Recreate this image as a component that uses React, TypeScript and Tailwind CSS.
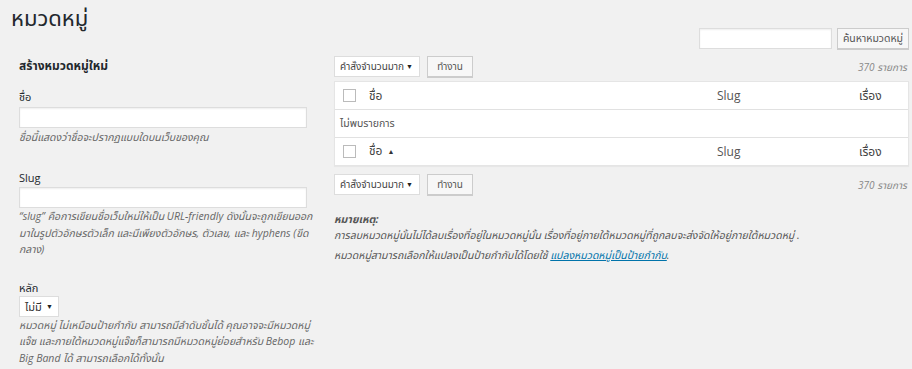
export default function App() {
  const font = { fontFamily: '"Open Sans", "Noto Sans", "Noto Sans Thai", Tahoma, sans-serif' };

  const BulkBar = () => (
    <div className="flex items-center justify-between">
      <div className="flex gap-[7px]">
        <div className="w-[86px] h-[21px] bg-white border border-[#ddd] flex items-center justify-between pl-[5px] pr-[6px] text-[10px] leading-[19px] text-[#444] whitespace-nowrap">
          <span>คำสั่งจำนวนมาก</span>
          <span className="text-[7px] text-[#222]">▼</span>
        </div>
        <button className="h-[21px] w-[46px] bg-[#f7f7f7] border border-[#ccc] text-[10px] leading-[19px] text-[#555] shadow-[0_1px_0_#ccc]">
          ทำงาน
        </button>
      </div>
      <span className="italic text-[10px] leading-[16px] text-[#888] pr-[2px]">370 รายการ</span>
    </div>
  );

  const HeadRow = ({ arrow }: { arrow?: boolean }) => (
    <div className="flex items-center h-[27px]">
      <span className="ml-[8px] w-[13px] h-[13px] border border-[#bbb] bg-white" />
      <span className="ml-[13px] flex-1 text-[12px] leading-[16px] text-[#444]">
        ชื่อ{arrow && <span className="text-[7px] align-middle ml-[5px] text-[#333]">▲</span>}
      </span>
      <span className="w-[142px] text-[12px] leading-[16px] text-[#555]">Slug</span>
      <span className="w-[49px] text-[12px] leading-[16px] text-[#444]">เรื่อง</span>
    </div>
  );

  return (
    <div className="w-[912px] h-[369px] overflow-hidden bg-[#f1f1f1] text-[#444]" style={font}>
      <div className="flex items-start justify-between pl-[11px] pr-[3px] pt-[2px]">
        <h1 className="text-[22px] leading-[30px] text-[#23282d] font-normal">หมวดหมู่</h1>
        <div className="flex gap-[5px] mt-[26px]">
          <input className="w-[133px] h-[21px] bg-white border border-[#ddd] shadow-[inset_0_1px_2px_rgba(0,0,0,0.07)]" />
          <button className="h-[21px] w-[72px] bg-[#f7f7f7] border border-[#ccc] text-[10.5px] leading-[19px] text-[#555] whitespace-nowrap shadow-[0_1px_0_#ccc]">
            ค้นหาหมวดหมู่
          </button>
        </div>
      </div>

      <div className="flex pl-[19px] pr-[3px] mt-[7px]">
        {/* left column */}
        <div className="w-[300px] shrink-0">
          <h2 className="font-bold text-[12px] text-[#23282d] leading-[20px]">สร้างหมวดหมู่ใหม่</h2>

          <label className="block mt-[13px] text-[11px] leading-[16px] text-[#23282d]">ชื่อ</label>
          <input className="block mt-[2px] w-[288px] h-[21px] bg-white border border-[#ddd] shadow-[inset_0_1px_2px_rgba(0,0,0,0.07)]" />
          <p className="italic text-[10.5px] leading-[16px] text-[#666] mt-[1px] whitespace-nowrap">
            ชื่อนี้แสดงว่าชื่อจะปรากฏแบบใดบนเว็บของคุณ
          </p>

          <label className="block mt-[25px] text-[11px] leading-[16px] text-[#23282d]">Slug</label>
          <input className="block mt-[1px] w-[288px] h-[21px] bg-white border border-[#ddd] shadow-[inset_0_1px_2px_rgba(0,0,0,0.07)]" />
          <p className="italic text-[10.5px] leading-[16.5px] text-[#666] whitespace-nowrap">
            “slug” คือการเขียนชื่อเว็บใหม่ให้เป็น URL-friendly ดังนั้นจะถูกเขียนออก
            <br />
            มาในรูปตัวอักษรตัวเล็ก และมีเพียงตัวอักษร, ตัวเลข, และ hyphens (ขีด
            <br />
            กลาง)
          </p>

          <label className="block mt-[22px] text-[11px] leading-[16px] text-[#23282d]">หลัก</label>
          <div className="w-[40px] h-[21px] bg-white border border-[#ddd] flex items-center justify-between pl-[5px] pr-[5px] text-[11px] leading-[19px] text-[#333]">
            <span>ไม่มี</span>
            <span className="text-[7px] text-[#222]">▼</span>
          </div>
          <p className="italic text-[10.5px] leading-[16.5px] text-[#666] whitespace-nowrap">
            หมวดหมู่ ไม่เหมือนป้ายกำกับ สามารถมีลำดับชั้นได้ คุณอาจจะมีหมวดหมู่
            <br />
            แจ๊ซ และภายใต้หมวดหมู่แจ๊ซก็สามารถมีหมวดหมู่ย่อยสำหรับ Bebop และ
            <br />
            Big Band ได้ สามารถเลือกได้ทั้งนั้น
          </p>
        </div>

        {/* right column */}
        <div className="flex-1 ml-[15px]">
          <BulkBar />

          <div className="mt-[4px] bg-white border border-[#e5e5e5] shadow-[0_1px_1px_rgba(0,0,0,0.04)]">
            <div className="border-b border-[#e1e1e1]">
              <HeadRow />
            </div>
            <div className="flex items-center h-[28px] border-b border-[#e1e1e1] pl-[5px] text-[10.5px] text-[#555]">
              ไม่พบรายการ
            </div>
            <HeadRow arrow />
          </div>

          <div className="mt-[8px]">
            <BulkBar />
          </div>

          <div className="mt-[16px] italic text-[10.5px] text-[#555] whitespace-nowrap">
            <p className="font-bold leading-[16px]">หมายเหตุ:</p>
            <p className="leading-[16px]">
              การลบหมวดหมู่นั้นไม่ได้ลบเรื่องที่อยู่ในหมวดหมู่นั้น เรื่องที่อยู่ภายใต้หมวดหมู่ที่ถูกลบจะส่งจัดให้อยู่ภายใต้หมวดหมู่ .
            </p>
            <p className="leading-[16px] mt-[4px]">
              หมวดหมู่สามารถเลือกให้แปลงเป็นป้ายกำกับได้โดยใช้{" "}
              <a className="text-[#0073aa] underline">แปลงหมวดหมู่เป็นป้ายกำกับ</a>.
            </p>
          </div>
        </div>
      </div>
    </div>
  );
}
